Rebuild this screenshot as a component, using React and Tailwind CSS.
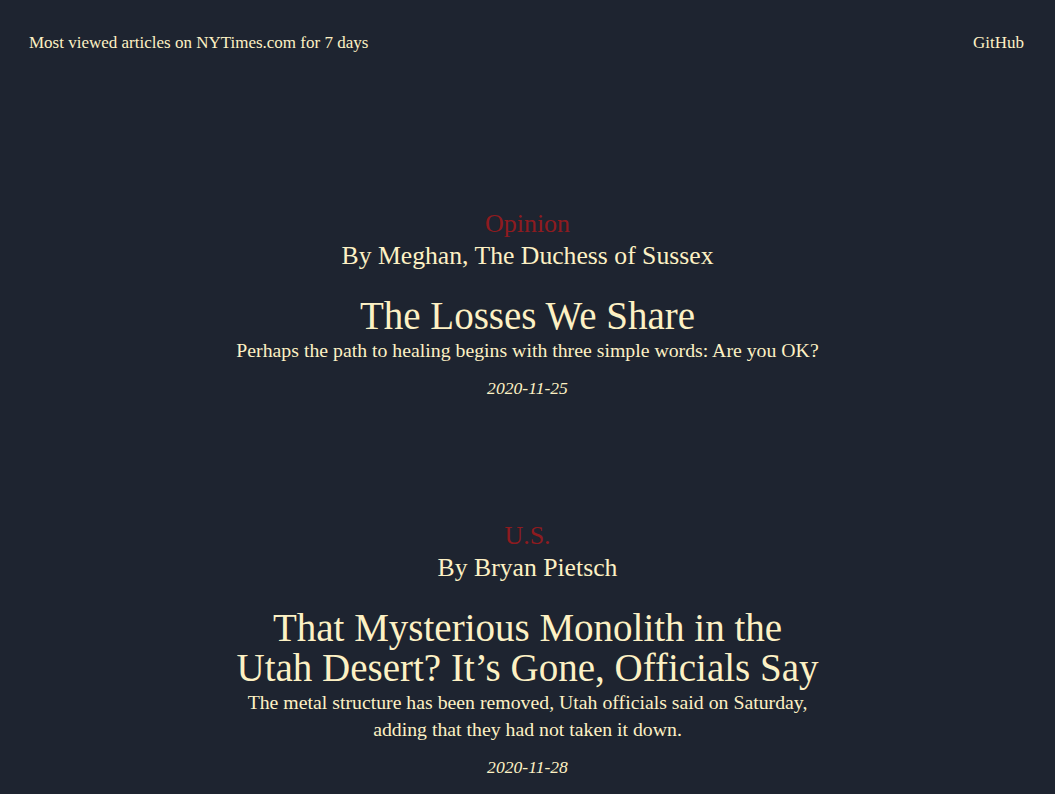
const articles = [
  {
    section: "Opinion",
    byline: "By Meghan, The Duchess of Sussex",
    title: "The Losses We Share",
    abstract: "Perhaps the path to healing begins with three simple words: Are you OK?",
    date: "2020-11-25",
  },
  {
    section: "U.S.",
    byline: "By Bryan Pietsch",
    title: "That Mysterious Monolith in the Utah Desert? It’s Gone, Officials Say",
    abstract:
      "The metal structure has been removed, Utah officials said on Saturday, adding that they had not taken it down.",
    date: "2020-11-28",
  },
];

const Article = ({ item }) => (
  <article className="flex flex-col items-center text-center">
    <p className="text-[26px] leading-[32px] text-[#8e1b1f]">{item.section}</p>
    <p className="text-[25.7px] leading-[32px]">{item.byline}</p>
    <h2 className="mt-6 max-w-[592px] text-[39px] leading-[40px]">{item.title}</h2>
    <p className="mt-[1px] max-w-[592px] text-[19.8px] leading-[27px]">{item.abstract}</p>
    <p className="mt-[12px] text-[17.6px] leading-[24px] italic">{item.date}</p>
  </article>
);

export default function App() {
  return (
    <div
      className="min-h-screen bg-[#1e2430] text-[#fdf1c4]"
      style={{ fontFamily: "'Liberation Serif', Georgia, serif" }}
    >
      <header className="flex items-center justify-between pl-[29px] pr-[31px] pt-[32px]">
        <span className="text-[17px] leading-[22px]">Most viewed articles on NYTimes.com for 7 days</span>
        <a href="#" className="text-[17px] leading-[22px]">GitHub</a>
      </header>
      <main className="mt-[154px] flex flex-col gap-[120px] pb-16">
        {articles.map((a) => (
          <Article key={a.date} item={a} />
        ))}
      </main>
    </div>
  );
}
